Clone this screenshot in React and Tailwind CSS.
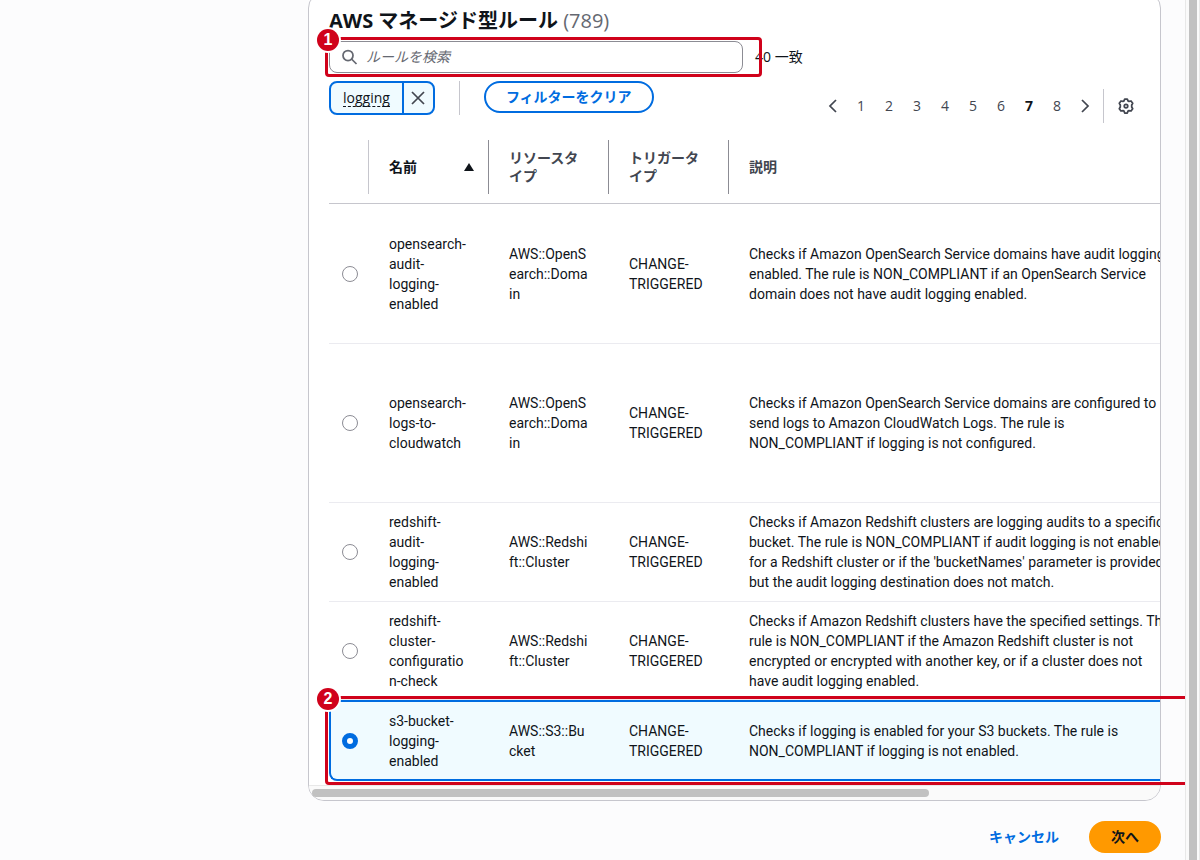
import { useState } from 'react';

const rules = [
  {
    id: 'opensearch-audit-logging-enabled',
    height: 'h-[140px]',
    name: ['opensearch-', 'audit-', 'logging-', 'enabled'],
    resource: ['AWS::OpenS', 'earch::Doma', 'in'],
    description: [
      'Checks if Amazon OpenSearch Service domains have audit logging',
      'enabled. The rule is NON_COMPLIANT if an OpenSearch Service',
      'domain does not have audit logging enabled.',
    ],
  },
  {
    id: 'opensearch-logs-to-cloudwatch',
    height: 'h-[159px]',
    name: ['opensearch-', 'logs-to-', 'cloudwatch'],
    resource: ['AWS::OpenS', 'earch::Doma', 'in'],
    description: [
      'Checks if Amazon OpenSearch Service domains are configured to',
      'send logs to Amazon CloudWatch Logs. The rule is',
      'NON_COMPLIANT if logging is not configured.',
    ],
  },
  {
    id: 'redshift-audit-logging-enabled',
    height: 'h-[99px]',
    name: ['redshift-', 'audit-', 'logging-', 'enabled'],
    resource: ['AWS::Redshi', 'ft::Cluster'],
    description: [
      'Checks if Amazon Redshift clusters are logging audits to a specific',
      'bucket. The rule is NON_COMPLIANT if audit logging is not enabled',
      "for a Redshift cluster or if the 'bucketNames' parameter is provided",
      'but the audit logging destination does not match.',
    ],
  },
  {
    id: 'redshift-cluster-configuration-check',
    height: 'h-[98px]',
    name: ['redshift-', 'cluster-', 'configuratio', 'n-check'],
    resource: ['AWS::Redshi', 'ft::Cluster'],
    description: [
      'Checks if Amazon Redshift clusters have the specified settings. The',
      'rule is NON_COMPLIANT if the Amazon Redshift cluster is not',
      'encrypted or encrypted with another key, or if a cluster does not',
      'have audit logging enabled.',
    ],
  },
  {
    id: 's3-bucket-logging-enabled',
    height: 'h-[81px]',
    name: ['s3-bucket-', 'logging-', 'enabled'],
    resource: ['AWS::S3::Bu', 'cket'],
    description: [
      'Checks if logging is enabled for your S3 buckets. The rule is',
      'NON_COMPLIANT if logging is not enabled.',
    ],
  },
];

const pages = [1, 2, 3, 4, 5, 6, 7, 8];

function Lines({ items }) {
  return items.map((line, i) => (
    <span key={i} className="block whitespace-nowrap">
      {line}
    </span>
  ));
}

function Icon({ children, className = '' }) {
  return (
    <svg
      viewBox="0 0 16 16"
      fill="none"
      stroke="currentColor"
      strokeWidth="1.75"
      className={`size-4 shrink-0 ${className}`}
      aria-hidden="true"
    >
      {children}
    </svg>
  );
}

function Badge({ children }) {
  return (
    <span className="absolute -top-[11px] -left-[11px] flex size-[22px] items-center justify-center rounded-full bg-[#d0021b] font-['Liberation_Sans',sans-serif] text-base font-bold text-white ring-2 ring-white">
      {children}
    </span>
  );
}

function HeaderCell({ children, last, active }) {
  return (
    <th scope="col" className="h-[73px] border-b border-[#c6c6cd] p-0 text-left align-middle">
      <div
        className={`flex h-[54px] items-center justify-between pl-5 text-sm leading-[18px] font-bold ${
          last ? '' : 'border-r border-[#8c8c94]'
        } ${active ? 'pr-3.5 text-[#0f141a]' : 'pr-5 text-[#424650]'}`}
      >
        {children}
      </div>
    </th>
  );
}

function RuleRow({ rule, selected, onSelect }) {
  const cell = selected
    ? 'border-y-2 border-[#006ce0] bg-[#f0fbff]'
    : 'border-b border-[#ebebf0]';

  return (
    <tr className={rule.height}>
      <td className={`p-0 align-middle ${cell} ${selected ? 'rounded-l-lg border-l-2 pl-[11px]' : 'pl-[13px]'}`}>
        <input
          type="radio"
          name="rule"
          aria-label={rule.id}
          checked={selected}
          onChange={onSelect}
          className="block size-4 appearance-none rounded-full border border-[#8c8c94] bg-white checked:border-5 checked:border-[#006ce0]"
        />
      </td>
      <td className={`px-5 py-0 align-middle ${cell}`}>
        <Lines items={rule.name} />
      </td>
      <td className={`px-5 py-0 align-middle ${cell}`}>
        <Lines items={rule.resource} />
      </td>
      <td className={`px-5 py-0 align-middle ${cell}`}>
        <Lines items={['CHANGE-', 'TRIGGERED']} />
      </td>
      <td className={`px-5 py-0 align-middle ${cell}`}>
        <Lines items={rule.description} />
      </td>
    </tr>
  );
}

export default function App() {
  const [query, setQuery] = useState('');
  const [page, setPage] = useState(7);
  const [selected, setSelected] = useState('s3-bucket-logging-enabled');

  return (
    <div className="flex min-h-screen overflow-hidden bg-[#fcfcfd] font-['Open_Sans','Noto_Sans_CJK_JP',sans-serif] text-[#0f141a]">
      <main className="min-w-0 flex-1 pr-6 pl-[308px]">
        <section className="relative -mt-2 rounded-2xl border border-[#c6c6cd] bg-white">
          <div className="px-5 pt-4">
            <h2 className="text-xl leading-6 font-bold">
              AWS マネージド型ルール <span className="font-normal text-[#656871]">(789)</span>
            </h2>

            <div className="mt-2 flex items-center gap-3">
              <div className="w-[414px]">
                <label className="flex h-8 items-center gap-2 rounded-lg border border-[#8c8c94] bg-white px-3">
                  <Icon className="text-[#656871]">
                    <circle cx="6" cy="6.5" r="5" />
                    <path d="m9.5 10 5 5" />
                  </Icon>
                  <input
                    type="text"
                    aria-label="ルールを検索"
                    placeholder="ルールを検索"
                    value={query}
                    onChange={(e) => setQuery(e.target.value)}
                    className="min-w-0 flex-1 text-sm outline-none placeholder:text-[#656871] placeholder:italic"
                  />
                </label>
              </div>
              <span className="text-sm">40 一致</span>
            </div>

            <div className="mt-2 flex items-start justify-between">
              <div className="flex items-start gap-6">
                <div className="flex h-[34px] items-stretch rounded-lg border-2 border-[#006ce0] bg-[#f0fbff]">
                  <button type="button" className="flex items-center px-3 text-sm">
                    <span className="border-b border-dashed border-[#0f141a] leading-4">logging</span>
                  </button>
                  <button
                    type="button"
                    aria-label="logging を削除"
                    className="flex w-[31px] items-center justify-center border-l-2 border-[#006ce0] text-[#424650]"
                  >
                    <Icon>
                      <path d="m2 2 12 12M14 2 2 14" />
                    </Icon>
                  </button>
                </div>
                <span className="h-[34px] w-px bg-[#c6c6cd]" />
                <button
                  type="button"
                  className="h-8 rounded-full border-2 border-[#006ce0] bg-white px-5 text-sm leading-5 font-bold text-[#006ce0]"
                >
                  フィルターをクリア
                </button>
              </div>

              <div className="mt-2 flex h-[34px] items-center text-sm text-[#424650]">
                <nav aria-label="ページ" className="flex items-center">
                  <button type="button" aria-label="前のページ" className="flex w-7 justify-center">
                    <Icon>
                      <path d="m11 2-6 6 6 6" />
                    </Icon>
                  </button>
                  {pages.map((n) => (
                    <button
                      key={n}
                      type="button"
                      onClick={() => setPage(n)}
                      className={`w-7 text-center ${n === page ? 'font-bold text-[#0f141a]' : ''}`}
                    >
                      {n}
                    </button>
                  ))}
                  <button type="button" aria-label="次のページ" className="flex w-7 justify-center">
                    <Icon>
                      <path d="m5 2 6 6-6 6" />
                    </Icon>
                  </button>
                </nav>
                <span className="ml-1 h-[34px] w-px bg-[#c6c6cd]" />
                <button type="button" aria-label="設定" className="ml-2 px-1.5">
                  <Icon>
                    <path
                      strokeLinejoin="round"
                      d="M6.7 1h2.6l.7 1.9 1 .5 2-.4 1.7 2.3-1 1.7v2l1 1.7L13 13l-2-.4-1 .5-.7 1.9H6.7L6 13.100l-1-.5-2 .4-1.7-2.3 1-1.7V7l-1-1.7L3 3l2 .4 1-.5z"
                    />
                    <circle cx="8" cy="8" r="1.75" />
                  </Icon>
                </button>
              </div>
            </div>
          </div>

          <div className="mt-2 overflow-hidden pb-1 pl-5">
            <table className="w-[1140px] table-fixed border-separate border-spacing-0 text-sm leading-5">
              <colgroup>
                <col className="w-10" />
                <col className="w-[120px]" />
                <col className="w-[120px]" />
                <col className="w-[120px]" />
                <col />
              </colgroup>
              <thead>
                <tr>
                  <td className="border-b border-[#c6c6cd] p-0">
                    <div className="h-[54px] border-r border-[#c6c6cd]" />
                  </td>
                  <HeaderCell active>
                    名前
                    <svg viewBox="0 0 10 8" className="size-2.5" fill="currentColor" aria-hidden="true">
                      <path d="M5 0 10 8H0z" />
                    </svg>
                  </HeaderCell>
                  <HeaderCell>リソースタイプ</HeaderCell>
                  <HeaderCell>トリガータイプ</HeaderCell>
                  <HeaderCell last>説明</HeaderCell>
                </tr>
              </thead>
              <tbody className="font-['Roboto',sans-serif]">
                {rules.map((rule) => (
                  <RuleRow
                    key={rule.id}
                    rule={rule}
                    selected={rule.id === selected}
                    onSelect={() => setSelected(rule.id)}
                  />
                ))}
              </tbody>
            </table>
          </div>

          <div className="h-[15px] rounded-b-2xl border-t border-[#e8e8e8] bg-[#fafafa] px-[3px] pt-[3px]">
            <div className="h-2 w-[73%] rounded-full bg-[#c1c1c1]" />
          </div>

          {/* step markers */}
          <div className="pointer-events-none absolute top-11 left-4 h-10 w-[437px] rounded-sm border-3 border-[#d0021b]">
            <Badge>1</Badge>
          </div>
          <div className="pointer-events-none absolute -right-[25px] bottom-[15px] left-4 h-[89px] rounded-l-sm border-3 border-r-0 border-[#d0021b]">
            <Badge>2</Badge>
          </div>
        </section>

        <div className="mt-5 flex justify-end gap-2">
          <button
            type="button"
            className="h-8 rounded-full border-2 border-transparent px-5 text-sm leading-5 font-bold text-[#006ce0]"
          >
            キャンセル
          </button>
          <button
            type="button"
            className="h-8 rounded-full border-2 border-[#ff9900] bg-[#ff9900] px-5 text-sm leading-5 font-bold"
          >
            次へ
          </button>
        </div>
      </main>

      <div className="w-[15px] border-x border-[#e8e8e8] bg-[#fafafa] pr-0.5 pl-[3px]">
        <div className="h-full bg-[#c1c1c1]" />
      </div>
    </div>
  );
}
